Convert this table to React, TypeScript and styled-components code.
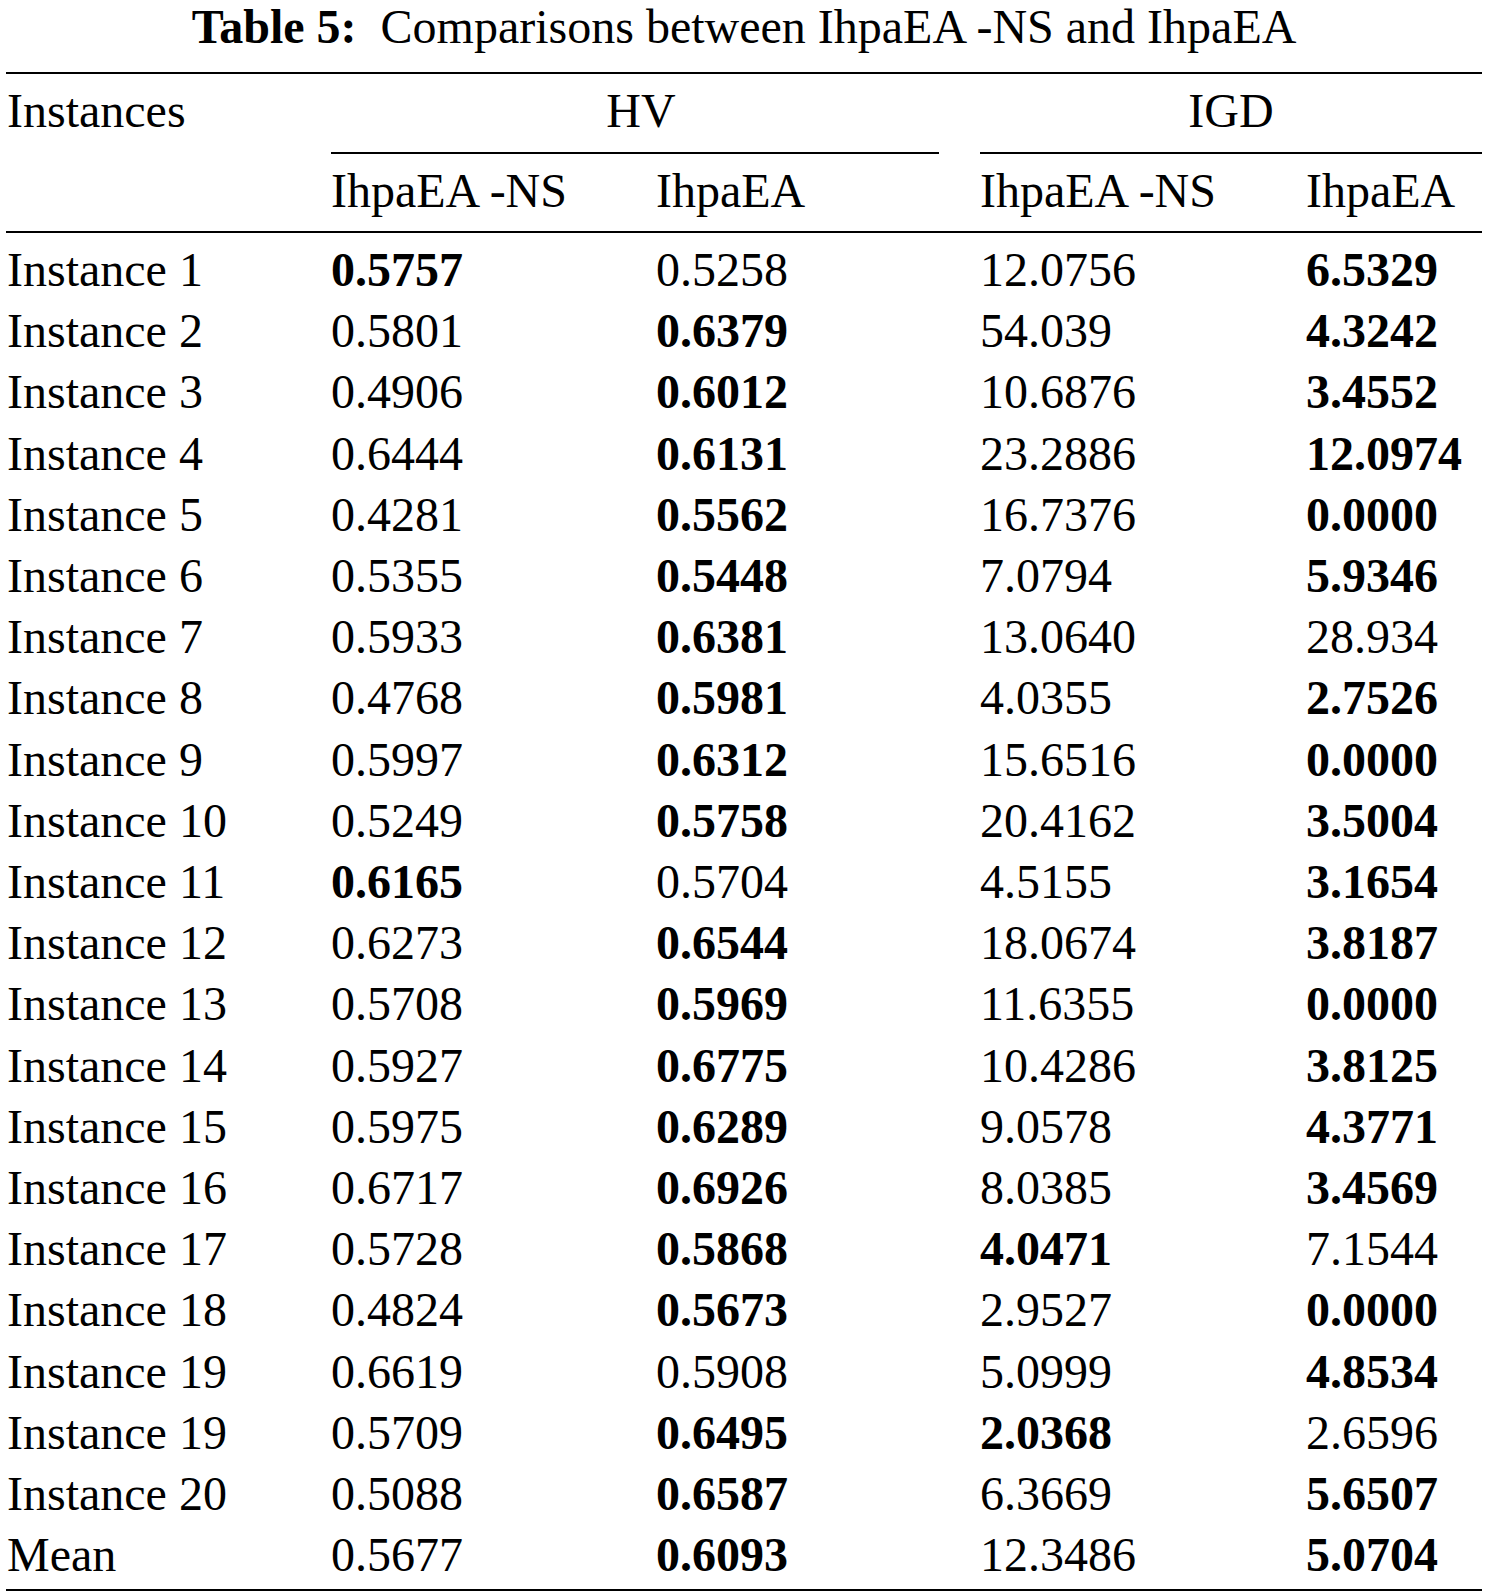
import styled, { createGlobalStyle } from "styled-components";

type Cell = { v: string; b?: boolean };
type Row = { name: string; cells: Cell[] };

const n = (v: string): Cell => ({ v });
const b = (v: string): Cell => ({ v, b: true });

const rows: Row[] = [
  { name: "Instance 1", cells: [b("0.5757"), n("0.5258"), n("12.0756"), b("6.5329")] },
  { name: "Instance 2", cells: [n("0.5801"), b("0.6379"), n("54.039"), b("4.3242")] },
  { name: "Instance 3", cells: [n("0.4906"), b("0.6012"), n("10.6876"), b("3.4552")] },
  { name: "Instance 4", cells: [n("0.6444"), b("0.6131"), n("23.2886"), b("12.0974")] },
  { name: "Instance 5", cells: [n("0.4281"), b("0.5562"), n("16.7376"), b("0.0000")] },
  { name: "Instance 6", cells: [n("0.5355"), b("0.5448"), n("7.0794"), b("5.9346")] },
  { name: "Instance 7", cells: [n("0.5933"), b("0.6381"), n("13.0640"), n("28.934")] },
  { name: "Instance 8", cells: [n("0.4768"), b("0.5981"), n("4.0355"), b("2.7526")] },
  { name: "Instance 9", cells: [n("0.5997"), b("0.6312"), n("15.6516"), b("0.0000")] },
  { name: "Instance 10", cells: [n("0.5249"), b("0.5758"), n("20.4162"), b("3.5004")] },
  { name: "Instance 11", cells: [b("0.6165"), n("0.5704"), n("4.5155"), b("3.1654")] },
  { name: "Instance 12", cells: [n("0.6273"), b("0.6544"), n("18.0674"), b("3.8187")] },
  { name: "Instance 13", cells: [n("0.5708"), b("0.5969"), n("11.6355"), b("0.0000")] },
  { name: "Instance 14", cells: [n("0.5927"), b("0.6775"), n("10.4286"), b("3.8125")] },
  { name: "Instance 15", cells: [n("0.5975"), b("0.6289"), n("9.0578"), b("4.3771")] },
  { name: "Instance 16", cells: [n("0.6717"), b("0.6926"), n("8.0385"), b("3.4569")] },
  { name: "Instance 17", cells: [n("0.5728"), b("0.5868"), b("4.0471"), n("7.1544")] },
  { name: "Instance 18", cells: [n("0.4824"), b("0.5673"), n("2.9527"), b("0.0000")] },
  { name: "Instance 19", cells: [n("0.6619"), n("0.5908"), n("5.0999"), b("4.8534")] },
  { name: "Instance 19", cells: [n("0.5709"), b("0.6495"), b("2.0368"), n("2.6596")] },
  { name: "Instance 20", cells: [n("0.5088"), b("0.6587"), n("6.3669"), b("5.6507")] },
  { name: "Mean", cells: [n("0.5677"), b("0.6093"), n("12.3486"), b("5.0704")] },
];

const GlobalStyle = createGlobalStyle`
  html, body {
    margin: 0;
    padding: 0;
    background: #ffffff;
  }
  body {
    font-family: "Liberation Serif", "Times New Roman", serif;
    color: #000000;
  }
`;

const COLUMNS = "325px 325px 324px 326px 176px";

const Page = styled.div`
  width: 1487px;
  padding: 0 5px 0 6px;
  box-sizing: border-box;
`;

const Caption = styled.div`
  text-align: center;
  font-size: 48px;
  line-height: 54px;
  white-space: pre;
  margin-bottom: 18px;

  strong {
    font-weight: 700;
  }
`;

const Table = styled.div`
  border-top: 2px solid #000;
  border-bottom: 2px solid #000;
  font-size: 48px;
`;

const Head = styled.div`
  display: grid;
  grid-template-columns: ${COLUMNS};
  grid-template-rows: auto auto;
  border-bottom: 2px solid #000;
`;

const HeadCell = styled.div<{ $pad?: number }>`
  grid-column: 1;
  grid-row: 1;
  line-height: 53px;
  padding: 10px 0 15px ${(p) => p.$pad ?? 0}px;
`;

const GroupHead = styled.div<{ $col: string; $gap?: number; $shift?: number }>`
  grid-column: ${(p) => p.$col};
  grid-row: 1;
  line-height: 53px;
  padding: 10px 0 15px ${(p) => p.$shift ?? 0}px;
  margin-right: ${(p) => p.$gap ?? 0}px;
  text-align: center;
  border-bottom: 2px solid #000;
`;

const SubHead = styled.div<{ $col: number }>`
  grid-column: ${(p) => p.$col};
  grid-row: 2;
  line-height: 53px;
  padding: 10px 0 14px;
`;

const Body = styled.div`
  padding: 6px 0 4px;
`;

const DataRow = styled.div`
  display: grid;
  grid-template-columns: ${COLUMNS};
  line-height: 61.2px;
  white-space: nowrap;
`;

const NameCell = styled.div`
  padding-left: 1px;
`;

const Value = styled.div<{ $bold?: boolean }>`
  font-weight: ${(p) => (p.$bold ? 700 : 400)};
`;

export default function App() {
  return (
    <Page>
      <GlobalStyle />
      <Caption>
        <strong>Table 5:</strong>
        {"  Comparisons between IhpaEA -NS and IhpaEA"}
      </Caption>
      <Table>
        <Head>
          <HeadCell $pad={1}>Instances</HeadCell>
          <GroupHead $col="2 / 4" $gap={41} $shift={12}>
            HV
          </GroupHead>
          <GroupHead $col="4 / 6">IGD</GroupHead>
          <SubHead $col={2}>IhpaEA -NS</SubHead>
          <SubHead $col={3}>IhpaEA</SubHead>
          <SubHead $col={4}>IhpaEA -NS</SubHead>
          <SubHead $col={5}>IhpaEA</SubHead>
        </Head>
        <Body>
          {rows.map((r, i) => (
            <DataRow key={i}>
              <NameCell>{r.name}</NameCell>
              {r.cells.map((c, j) => (
                <Value key={j} $bold={c.b}>
                  {c.v}
                </Value>
              ))}
            </DataRow>
          ))}
        </Body>
      </Table>
    </Page>
  );
}
